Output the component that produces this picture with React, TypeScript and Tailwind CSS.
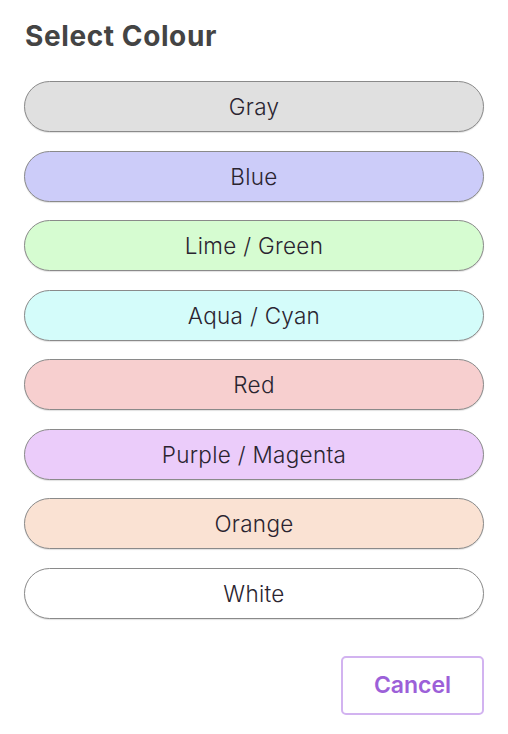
import React from "react";

const colours = [
  { name: "Gray", bg: "bg-[#e0e0e0]" },
  { name: "Blue", bg: "bg-[#ccccf9]" },
  { name: "Lime / Green", bg: "bg-[#d6fcd1]" },
  { name: "Aqua / Cyan", bg: "bg-[#d4fcfa]" },
  { name: "Red", bg: "bg-[#f7cfcf]" },
  { name: "Purple / Magenta", bg: "bg-[#ebccfa]" },
  { name: "Orange", bg: "bg-[#fae2d3]" },
  { name: "White", bg: "bg-white" },
];

export default function App() {
  return (
    <div className="w-[508px] h-[734px] bg-white px-[24px] pt-[19px] font-['Inter','Roboto',sans-serif]">
      <h1 className="text-[28px] leading-[34px] font-bold text-[#444] pl-[1px] tracking-[0.6px]">Select Colour</h1>
      <div className="mt-[28px] flex flex-col gap-[18.5px]">
        {colours.map((c) => (
          <button
            key={c.name}
            className={`h-[51px] w-full rounded-full border border-[#8a8a8a] ${c.bg} shadow-[0_1px_1px_rgba(0,0,0,0.12)] text-[22.5px] font-light tracking-[0.3px] text-[#2a2430] flex items-center justify-center pt-[1px]`}
          >
            {c.name}
          </button>
        ))}
      </div>
      <div className="mt-[37px] flex justify-end">
        <button className="h-[59px] w-[143px] rounded-[5px] border-2 border-[#d2b3f0] text-[#9c60d8] text-[23px] font-semibold flex items-center justify-center">
          Cancel
        </button>
      </div>
    </div>
  );
}
